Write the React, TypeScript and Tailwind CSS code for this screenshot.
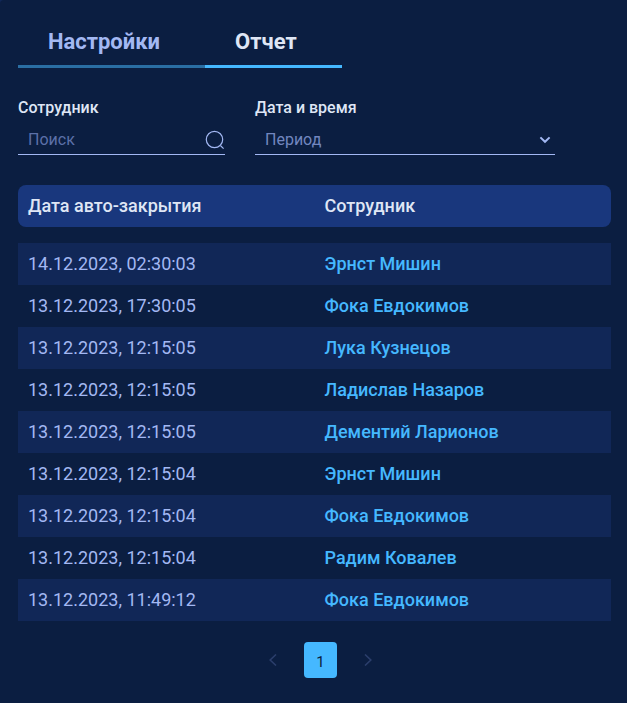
import { useState } from "react";
import clsx from "clsx";

type Tab = "settings" | "report";

const tabs: { id: Tab; label: string }[] = [
  { id: "settings", label: "Настройки" },
  { id: "report", label: "Отчет" },
];

const rows = [
  { date: "14.12.2023, 02:30:03", employee: "Эрнст Мишин" },
  { date: "13.12.2023, 17:30:05", employee: "Фока Евдокимов" },
  { date: "13.12.2023, 12:15:05", employee: "Лука Кузнецов" },
  { date: "13.12.2023, 12:15:05", employee: "Ладислав Назаров" },
  { date: "13.12.2023, 12:15:05", employee: "Дементий Ларионов" },
  { date: "13.12.2023, 12:15:04", employee: "Эрнст Мишин" },
  { date: "13.12.2023, 12:15:04", employee: "Фока Евдокимов" },
  { date: "13.12.2023, 12:15:04", employee: "Радим Ковалев" },
  { date: "13.12.2023, 11:49:12", employee: "Фока Евдокимов" },
];

function SearchIcon() {
  return (
    <svg className="h-5 w-5" viewBox="0 0 20 20" fill="none" stroke="currentColor" strokeWidth="1.2">
      <circle cx="9.5" cy="9.5" r="8.2" />
      <path d="M15.6 15.8l3 2.8" />
    </svg>
  );
}

function ChevronDown() {
  return (
    <svg className="h-2 w-3" viewBox="0 0 12 8" fill="none" stroke="currentColor" strokeWidth="2">
      <path d="M1.4 1.4L6 5.8l4.6-4.4" />
    </svg>
  );
}

function PageArrow({ direction }: { direction: "prev" | "next" }) {
  return (
    <svg className="h-3 w-2" viewBox="0 0 8 12" fill="none" stroke="currentColor" strokeWidth="1.6">
      <path d={direction === "prev" ? "M7 0.5L1.2 6L7 11.5" : "M1 0.5L6.8 6L1 11.5"} />
    </svg>
  );
}

function Tabs({ active, onChange }: { active: Tab; onChange: (tab: Tab) => void }) {
  return (
    <nav className="flex">
      {tabs.map(({ id, label }) => (
        <button
          key={id}
          type="button"
          onClick={() => onChange(id)}
          className={clsx(
            "border-b-3 pr-[45px] pb-[9px] pl-[30px] text-[22px] leading-7 font-bold",
            active === id ? "border-[#45b8ff] text-[#dfe6f5]" : "border-[#2a6ea3] text-[#a3b8f3]"
          )}
        >
          {label}
        </button>
      ))}
    </nav>
  );
}

function Filters() {
  return (
    <div className="mt-[30px] flex gap-[30px]">
      <div className="w-[207px]">
        <label htmlFor="employee" className="block text-base leading-5 font-medium text-[#dfe6f5]">
          Сотрудник
        </label>
        <div className="mt-[7px] flex h-[30px] items-center border-b border-[#a3b8f3]">
          <input
            id="employee"
            type="text"
            placeholder="Поиск"
            className="min-w-0 flex-1 bg-transparent px-2.5 text-base text-[#a3b8f3] outline-none placeholder:text-[#5c70a8]"
          />
          <button type="button" aria-label="Найти" className="text-[#a3b8f3]">
            <SearchIcon />
          </button>
        </div>
      </div>
      <div className="w-[300px]">
        <label htmlFor="period" className="block text-base leading-5 font-medium text-[#dfe6f5]">
          Дата и время
        </label>
        <div className="relative mt-[7px] h-[30px] border-b border-[#a3b8f3]">
          <select
            id="period"
            className="h-full w-full appearance-none bg-transparent px-2.5 text-base text-[#7286bf] outline-none"
          >
            <option>Период</option>
          </select>
          <span className="pointer-events-none absolute inset-y-0 right-1 flex items-center text-[#a3b8f3]">
            <ChevronDown />
          </span>
        </div>
      </div>
    </div>
  );
}

function ReportTable() {
  return (
    <table className="mt-[30px] w-full table-fixed text-left text-lg leading-[22px]">
      <thead>
        <tr className="text-[#dfe6f5]">
          <th className="rounded-l-lg bg-[#19377d] p-2.5 font-medium">Дата авто-закрытия</th>
          <th className="rounded-r-lg bg-[#19377d] p-2.5 font-medium">Сотрудник</th>
        </tr>
      </thead>
      <tbody className="before:block before:h-4">
        {rows.map((row, i) => (
          <tr key={i} className="odd:bg-[#112757]">
            <td className="p-2.5 text-[#a3b8f3]">{row.date}</td>
            <td className="p-2.5 font-medium">
              <a href="#" className="text-[#45b8ff]">
                {row.employee}
              </a>
            </td>
          </tr>
        ))}
      </tbody>
    </table>
  );
}

function Pagination() {
  return (
    <div className="mt-[21px] flex items-center justify-center gap-[27px] pr-px pl-[13px]">
      <button type="button" disabled aria-label="Предыдущая страница" className="text-[#2b3e6b]">
        <PageArrow direction="prev" />
      </button>
      <button
        type="button"
        className="h-9 w-[33px] rounded-sm bg-[#45b8ff] pt-1 text-[15px] leading-5 text-[#0b1e41]"
      >
        1
      </button>
      <button type="button" disabled aria-label="Следующая страница" className="text-[#2b3e6b]">
        <PageArrow direction="next" />
      </button>
    </div>
  );
}

export default function App() {
  const [tab, setTab] = useState<Tab>("report");

  return (
    <div className="bg-[#112757] font-['Roboto',sans-serif]">
      <main className="min-h-screen rounded-tl bg-[#0b1e41] pt-7 pr-4 pb-6 pl-[18px]">
        <Tabs active={tab} onChange={setTab} />
        <Filters />
        <ReportTable />
        <Pagination />
      </main>
    </div>
  );
}
